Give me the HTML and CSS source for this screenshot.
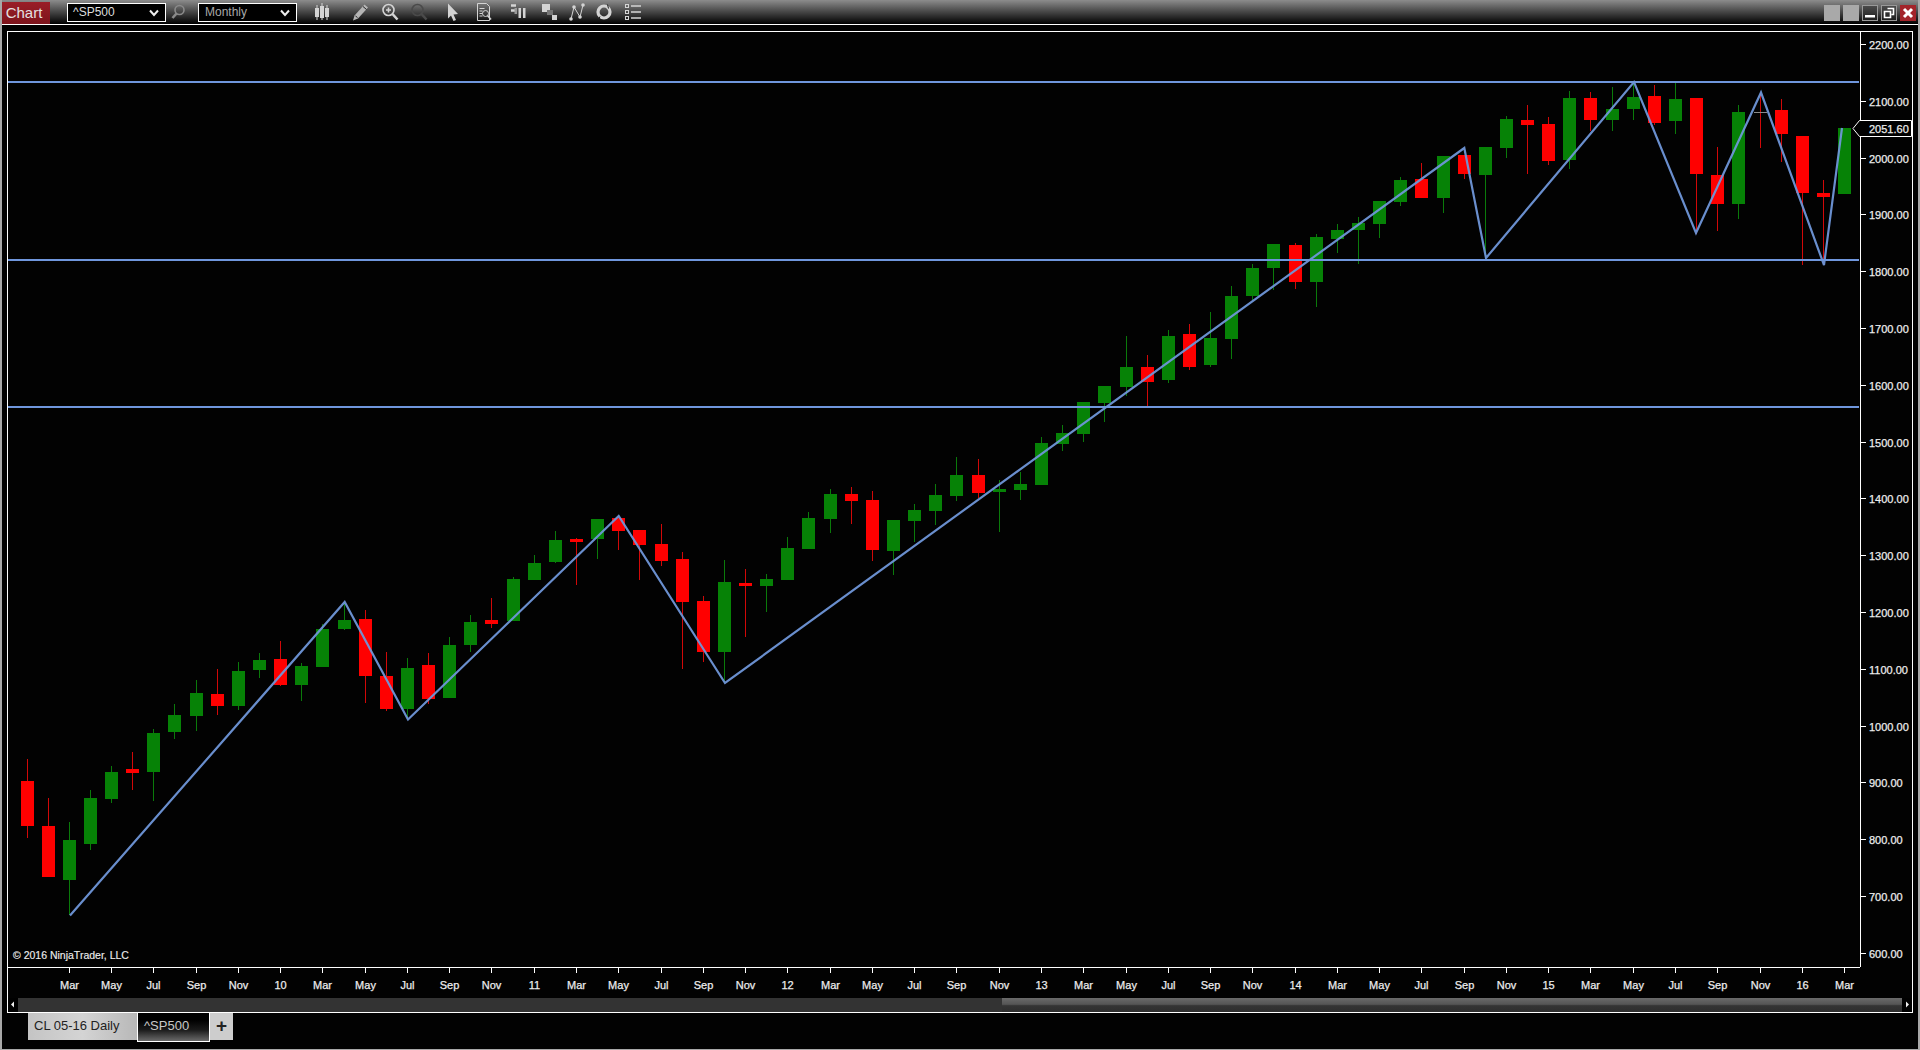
FILE: index.html
```html
<!DOCTYPE html>
<html lang="en">
<head>
<meta charset="utf-8">
<title>Chart - ^SP500</title>
<link rel="stylesheet" href="styles.css">
</head>
<body>
<div class="app">
  <header class="toolbar">
    <div class="brand">Chart</div>
    <div class="select first"><span>^SP500</span><svg class="chev" viewBox="0 0 10 8"><path d="M1 1.500l4 4.500 4-4.500"/></svg></div>
    <svg class="ic ic-search" viewBox="0 0 20 20"><circle cx="11.500" cy="8" r="4.500" class="s dim"/><path d="M8.500 11.500L4.500 16" class="s dim thick"/></svg>
    <div class="select second"><span class="muted">Monthly</span><svg class="chev" viewBox="0 0 10 8"><path d="M1 1.500l4 4.500 4-4.500"/></svg></div>
    <svg class="ic g15" viewBox="0 0 20 20"><path d="M5 3v15M10 1v17M15 3v15" class="s lite thin"/><rect x="3" y="6" width="4" height="9" class="f lite"/><rect x="8" y="4" width="4" height="12" class="f lite"/><rect x="13" y="6" width="4" height="9" class="f lite"/></svg>
    <svg class="ic g18" viewBox="0 0 20 20"><path d="M4.500 13.500L14.500 2.500l3.500 3L8 16.500l-5 2z" class="f mid3"/><path d="M13 4.500l3.500 3M5.500 14l2 1.500" class="s blk thin"/></svg>
    <svg class="ic g10" viewBox="0 0 20 20"><circle cx="8.500" cy="8" r="5.500" class="s lite"/><path d="M12.500 12L17.500 17.500" class="s lite thick"/><path d="M8.500 5.500v5M6 8h5" class="s lite"/></svg>
    <svg class="ic g9" viewBox="0 0 20 20"><circle cx="8.500" cy="8" r="5.500" class="s dark"/><path d="M12.500 12L17.500 17.500" class="s dark thick"/></svg>
    <svg class="ic g14" viewBox="0 0 20 20"><path d="M5 1.500l10 10.500-4.500.5 2.500 5.500-2.500 1-2.500-5.500L5 16.500z" class="f lite"/></svg>
    <svg class="ic g11" viewBox="0 0 20 20"><path d="M3.500 1.500h9l3 3v14h-12z" class="s lite thin"/><path d="M5.500 6.500h5M5.500 9h3M5.500 11.500h3M5.500 14h3" class="s lite thin"/><circle cx="11.500" cy="11.500" r="3" class="s lite thin"/><path d="M13.500 13.500l3.500 4" class="s lite"/></svg>
    <svg class="ic g14" viewBox="0 0 20 20"><path d="M3 3.500h5M3 8.500h5" class="s lite thick"/><rect x="6.500" y="6" width="2.500" height="6" class="f dark2"/><rect x="10.500" y="6" width="2.500" height="10" class="f lite"/><rect x="15" y="6" width="2.500" height="10" class="f lite"/></svg>
    <svg class="ic g11" viewBox="0 0 20 20"><rect x="3" y="2" width="8" height="8" class="f lite"/><rect x="8" y="8" width="6" height="5" class="f mid2"/><rect x="13" y="13" width="5" height="5" class="f lite"/></svg>
    <svg class="ic g8" viewBox="0 0 20 20"><path d="M4 17L7 5l6 10 3-12" class="s lite thin"/><circle cx="4" cy="17" r="1.800" class="f lite"/><circle cx="7" cy="5" r="1.800" class="f lite"/><circle cx="13" cy="15" r="1.800" class="f lite"/><circle cx="16" cy="3" r="1.800" class="f lite"/></svg>
    <svg class="ic g7" viewBox="0 0 20 20"><circle cx="10" cy="10" r="6" class="s lite ring"/><path d="M13.500 2.500l1 4M6 14.500l-1.500 3" class="s blk thin"/></svg>
    <svg class="ic g9" viewBox="0 0 20 20"><rect x="2.500" y="2.500" width="3" height="3" class="s lite thin"/><rect x="2.500" y="8.500" width="3" height="3" class="s lite thin"/><rect x="2.500" y="14.500" width="3" height="3" class="s lite thin"/><path d="M8 4h10M8 10h10M8 16h10" class="s lite"/></svg>
    <div class="win-buttons">
      <div class="wb plain"></div>
      <div class="wb plain"></div>
      <div class="wb dark"><svg viewBox="0 0 16 16"><rect x="3" y="10" width="10" height="2.500" class="f white"/></svg></div>
      <div class="wb dark"><svg viewBox="0 0 16 16"><path d="M6.500 3.500h6v6h-2M3.500 6.500h6v6h-6z" class="s white"/></svg></div>
      <div class="wb close"><svg viewBox="0 0 16 16"><path d="M4 4l8 8M12 4l-8 8" class="s white heavy"/></svg></div>
    </div>
  </header>

  <main class="frame">
    <div class="chart-grid">
      <svg id="plot" class="plot" viewBox="8 32 1852 935" width="1852" height="935"></svg>
      <svg id="price" class="price" viewBox="1861 32 51 935" width="51" height="935"></svg>
      <svg id="time" class="time" viewBox="8 968 1904 30" width="1904" height="30"></svg>
    </div>
    <div class="scrollbar">
      <div class="sb-btn"><svg viewBox="0 0 10 13"><path d="M3 6.500l3-3v6z"/></svg></div>
      <div class="sb-track"><div class="sb-thumb"></div></div>
      <div class="sb-btn"><svg viewBox="0 0 10 13"><path d="M7 6.500l-3-3v6z"/></svg></div>
    </div>
  </main>

  <nav class="tabs">
    <div class="tab">CL 05-16 Daily</div>
    <div class="tab active">^SP500</div>
    <div class="tab add">+</div>
  </nav>
</div>
<script src="script.js"></script>
</body>
</html>
```
FILE: styles.css
```css
* { box-sizing: border-box; }
html, body { margin: 0; padding: 0; background: #000; }
body { width: 1920px; height: 1050px; overflow: hidden; font-family: "Liberation Sans", Arial, sans-serif; }
.app { width: 1920px; height: 1050px; display: flex; flex-direction: column; background: #020202; border-left: 2px solid #a8a8a8; border-right: 2px solid #a8a8a8; border-bottom: 1px solid #a8a8a8; }

.toolbar { height: 25px; flex: none; display: flex; align-items: center; border-bottom: 1px solid #fff; background: linear-gradient(#8c8c8c 0, #5a5a5a 35%, #1c1c1c 80%, #000 100%); }
.brand { width: 48px; height: 22px; margin-top: 2px; background: linear-gradient(#9a1e27, #7d141c); color: #e4e0e0; font-size: 15px; line-height: 22px; text-align: center; padding-right: 4px; }
.select { width: 99px; height: 19px; margin-top: 1px; border: 1px solid #fff; background: #000; color: #ddd; font-size: 12px; line-height: 17px; padding-left: 5px; padding-right: 6px; display: flex; align-items: center; justify-content: space-between; }
.select.first { margin-left: 17px; }
.select.second { margin-left: 10px; }
.muted { color: #a8a8a8; padding-left: 1px; }
.chev { width: 10px; height: 8px; }
.chev path { fill: none; stroke: #eee; stroke-width: 2; }

.ic { width: 20px; height: 20px; flex: none; }
.ic-search { margin-left: 2px; }
.g7 { margin-left: 7px; } .g8 { margin-left: 8px; } .g9 { margin-left: 9px; } .g10 { margin-left: 10px; }
.g11 { margin-left: 11px; } .g14 { margin-left: 14px; } .g15 { margin-left: 15px; } .g18 { margin-left: 18px; }
.s { fill: none; stroke-width: 1.6; }
.s.thin { stroke-width: 1; } .s.thick { stroke-width: 2.6; } .s.heavy { stroke-width: 3; } .s.ring { stroke-width: 3.2; }
.s.lite { stroke: #d4d4d4; } .s.mid { stroke: #b0b0b0; } .s.dim { stroke: #8a8a8a; } .s.dark { stroke: #4a4a4a; } .s.white { stroke: #fff; } .s.blk { stroke: #222; }
.f.lite { fill: #d4d4d4; } .f.mid2 { fill: #777; } .f.mid3 { fill: #b4b4b4; } .f.dark2 { fill: #999; } .f.white { fill: #fff; }

.win-buttons { margin-left: auto; display: flex; gap: 3px; margin-right: 2px; margin-top: 1px; }
.wb { width: 16px; height: 16px; }
.wb svg { display: block; width: 16px; height: 16px; }
.wb.plain { background: #a9a9a9; }
.wb.dark { background: linear-gradient(#4a4a4a, #1d1d1d); border: 1px solid #999; }
.wb.dark svg { margin: -1px; }
.wb.close { background: #a3242a; }

.frame { margin: 6px 5px 0 5px; width: 1906px; flex: none; border: 1px solid #fff; }
.chart-grid { display: grid; grid-template-columns: 1852px 52px; grid-template-rows: 936px 30px; }
.plot { display: block; overflow: hidden; background: #020202; grid-column: 1; grid-row: 1; height: 935px; box-sizing: content-box; border-bottom: 1px solid #fff; }
.price { display: block; overflow: visible; grid-column: 2; grid-row: 1; border-left: 1px solid #fff; box-sizing: content-box; }
.time { display: block; grid-column: 1 / 3; grid-row: 2; }
.axis-text { font-family: "Liberation Sans", Arial, sans-serif; font-size: 11px; fill: #ececec; stroke: #ececec; stroke-width: 0.25px; }
.copyright { font-size: 10.5px; stroke-width: 0.15px; }
.tick { stroke: #fff; stroke-width: 1; shape-rendering: crispEdges; }
.wick, .body { shape-rendering: crispEdges; }
.up-b { fill: #068206; } .up-w { fill: #0a7a0a; }
.dn-b { fill: #ff0000; } .dn-w { fill: #d20808; }
.dj-b { fill: #8a8a8a; }
.hline { stroke: #6f96dc; stroke-width: 2; shape-rendering: crispEdges; }
.zig { fill: none; stroke: #6f96d8; stroke-width: 2.2; stroke-linejoin: miter; stroke-opacity: .95; }
.flag { fill: #000; stroke: #fff; stroke-width: 1; }

.scrollbar { height: 14px; display: flex; background: #333; }
.sb-btn { width: 10px; background: #000; flex: none; }
.sb-btn svg { display: block; width: 10px; height: 13px; fill: #eee; }
.sb-track { flex: 1; display: flex; justify-content: flex-end; background: #333; }
.sb-thumb { width: 900px; background: linear-gradient(#6a6a6a, #555 45%, #343434 55%, #2e2e2e); }

.tabs { display: flex; margin-left: 26px; align-items: flex-start; font-size: 13px; }
.tab { width: 109px; height: 27px; line-height: 26px; padding-left: 6px; color: #222; background: linear-gradient(90deg, #c4c4c4, #d4d4d4 50%, #b8b8b8); }
.tab.active { width: 73px; height: 29px; border: 1px solid #fff; border-top: 0; padding-left: 6px; color: #c8c8c8; background: linear-gradient(#000 25%, #1a1a1a 60%, #6a6a6a); }
.tab.add { width: 23px; padding: 0; text-align: center; font-size: 19px; font-weight: 700; background: #cdcdcd; color: #222; }
```
FILE: script.js
```javascript
var NS = "http://www.w3.org/2000/svg";
// [body top, body bottom, high, low, colour] in chart pixels
var bars = [
[781,826,759,838,"r"],[826,877,798,877,"r"],[840,880,822,915,"g"],[798,844,790,850,"g"],[772,799,766,803,"g"],
[769,773,752,790,"r"],[733,772,729,801,"g"],[715,732,704,739,"g"],[693,716,680,731,"g"],[694,706,669,715,"r"],
[671,706,662,710,"g"],[660,670,653,678,"g"],[659,685,641,686,"r"],[666,685,663,701,"g"],[629,667,624,667,"g"],
[620,629,603,630,"g"],[619,676,610,703,"r"],[676,709,652,711,"r"],[668,709,658,717,"g"],[665,699,653,704,"r"],
[645,698,637,698,"g"],[622,645,615,652,"g"],[620,624,598,628,"r"],[579,621,577,621,"g"],[563,580,555,580,"g"],
[540,562,531,563,"g"],[539,542,538,585,"r"],[519,539,519,559,"g"],[518,531,516,550,"r"],[530,545,530,580,"r"],
[544,561,524,566,"r"],[559,602,552,669,"r"],[601,652,596,662,"r"],[582,652,560,683,"g"],[583,586,569,637,"r"],
[579,586,574,612,"g"],[548,580,537,580,"g"],[518,549,512,549,"g"],[494,519,489,533,"g"],[494,501,487,524,"r"],
[500,550,491,561,"r"],[520,551,520,575,"g"],[510,521,504,542,"g"],[495,511,484,525,"g"],[475,496,457,501,"g"],
[475,493,459,498,"r"],[489,492,480,532,"g"],[484,490,472,500,"g"],[443,485,437,485,"g"],[433,444,425,451,"g"],
[402,434,402,442,"g"],[386,403,386,422,"g"],[367,387,336,396,"g"],[367,382,355,406,"r"],[336,380,330,383,"g"],
[334,367,324,370,"r"],[338,365,312,367,"g"],[296,339,286,359,"g"],[268,296,264,300,"g"],[244,268,244,290,"g"],
[245,282,243,289,"r"],[237,282,234,307,"g"],[230,239,224,253,"g"],[223,230,217,264,"g"],[201,224,201,238,"g"],
[180,202,177,206,"g"],[179,198,163,198,"r"],[156,198,156,213,"g"],[155,174,155,179,"r"],[147,175,147,258,"g"],
[119,148,116,158,"g"],[120,125,105,174,"r"],[124,161,117,165,"r"],[98,160,91,169,"g"],[98,120,92,131,"r"],
[109,120,87,131,"g"],[97,109,82,120,"g"],[96,123,85,125,"r"],[99,121,83,134,"g"],[98,174,98,234,"r"],
[175,204,147,231,"r"],[112,204,105,219,"g"],[112,113,93,148,"d"],[110,134,99,162,"r"],[136,193,136,265,"r"],
[193,197,180,265,"r"],[128,194,128,194,"g"]
];

function el(parent, name, attrs, text) {
  var node = document.createElementNS(NS, name);
  for (var k in attrs) node.setAttribute(k, attrs[k]);
  if (text !== undefined) node.textContent = text;
  parent.appendChild(node);
  return node;
}
function col(i) { return Math.floor(27.06 + 21.1335 * i); }

var plot = document.getElementById("plot");
bars.forEach(function (b, i) {
  var x = col(i), kind = b[4];
  var wick = kind === "g" ? "up-w" : "dn-w";
  var body = kind === "g" ? "up-b" : kind === "r" ? "dn-b" : "dj-b";
  if (b[3] > b[2]) el(plot, "rect", { x: x, y: b[2], width: 1, height: b[3] - b[2], "class": "wick " + wick });
  if (kind === "d") {
    el(plot, "rect", { x: x - 6, y: b[0], width: 13, height: b[1] - b[0], "class": "body " + body });
  } else {
    el(plot, "rect", { x: x - 6, y: b[0], width: 13, height: b[1] - b[0], "class": "body " + body });
  }
});
[82, 260, 407].forEach(function (y) {
  el(plot, "line", { x1: 8, x2: 1859, y1: y, y2: y, "class": "hline" });
});
el(plot, "polyline", {
  "class": "zig",
  points: "70,915.500 344.700,602 408,719.500 618.700,516 725,683 1464.300,148 1486,258 1634,82 1696,233 1761,92.500 1824,265 1842,128"
});
el(plot, "text", { x: 13, y: 959, "class": "axis-text copyright" }, "\u00a9 2016 NinjaTrader, LLC");

var price = document.getElementById("price");
for (var k = 0; k <= 16; k++) {
  var v = 2200 - k * 100;
  var y = Math.floor(44.5 + k * 56.8);
  el(price, "line", { x1: 1861, x2: 1866, y1: y + 0.5, y2: y + 0.5, "class": "tick" });
  el(price, "text", { x: 1869, y: y + 4.5, "class": "axis-text" }, v.toFixed(2));
}
el(price, "polygon", { "class": "flag", points: "1853,128.500 1859.500,120.500 1911.500,120.500 1911.500,136.500 1859.500,136.500" });
el(price, "text", { x: 1869, y: 132.500, "class": "axis-text" }, "2051.60");

var time = document.getElementById("time");
var names = { 3: "Mar", 5: "May", 7: "Jul", 9: "Sep", 11: "Nov" };
for (var i = 2; i <= 86; i += 2) {
  var m = i % 12 + 1;
  var yr = Math.floor(i / 12) + 9;
  var label = m === 1 ? String(yr) : names[m];
  var x = col(i);
  el(time, "line", { x1: x + 0.5, x2: x + 0.5, y1: 968, y2: 973, "class": "tick" });
  el(time, "text", { x: x + 0.5, y: 989, "text-anchor": "middle", "class": "axis-text" }, label);
}
```
